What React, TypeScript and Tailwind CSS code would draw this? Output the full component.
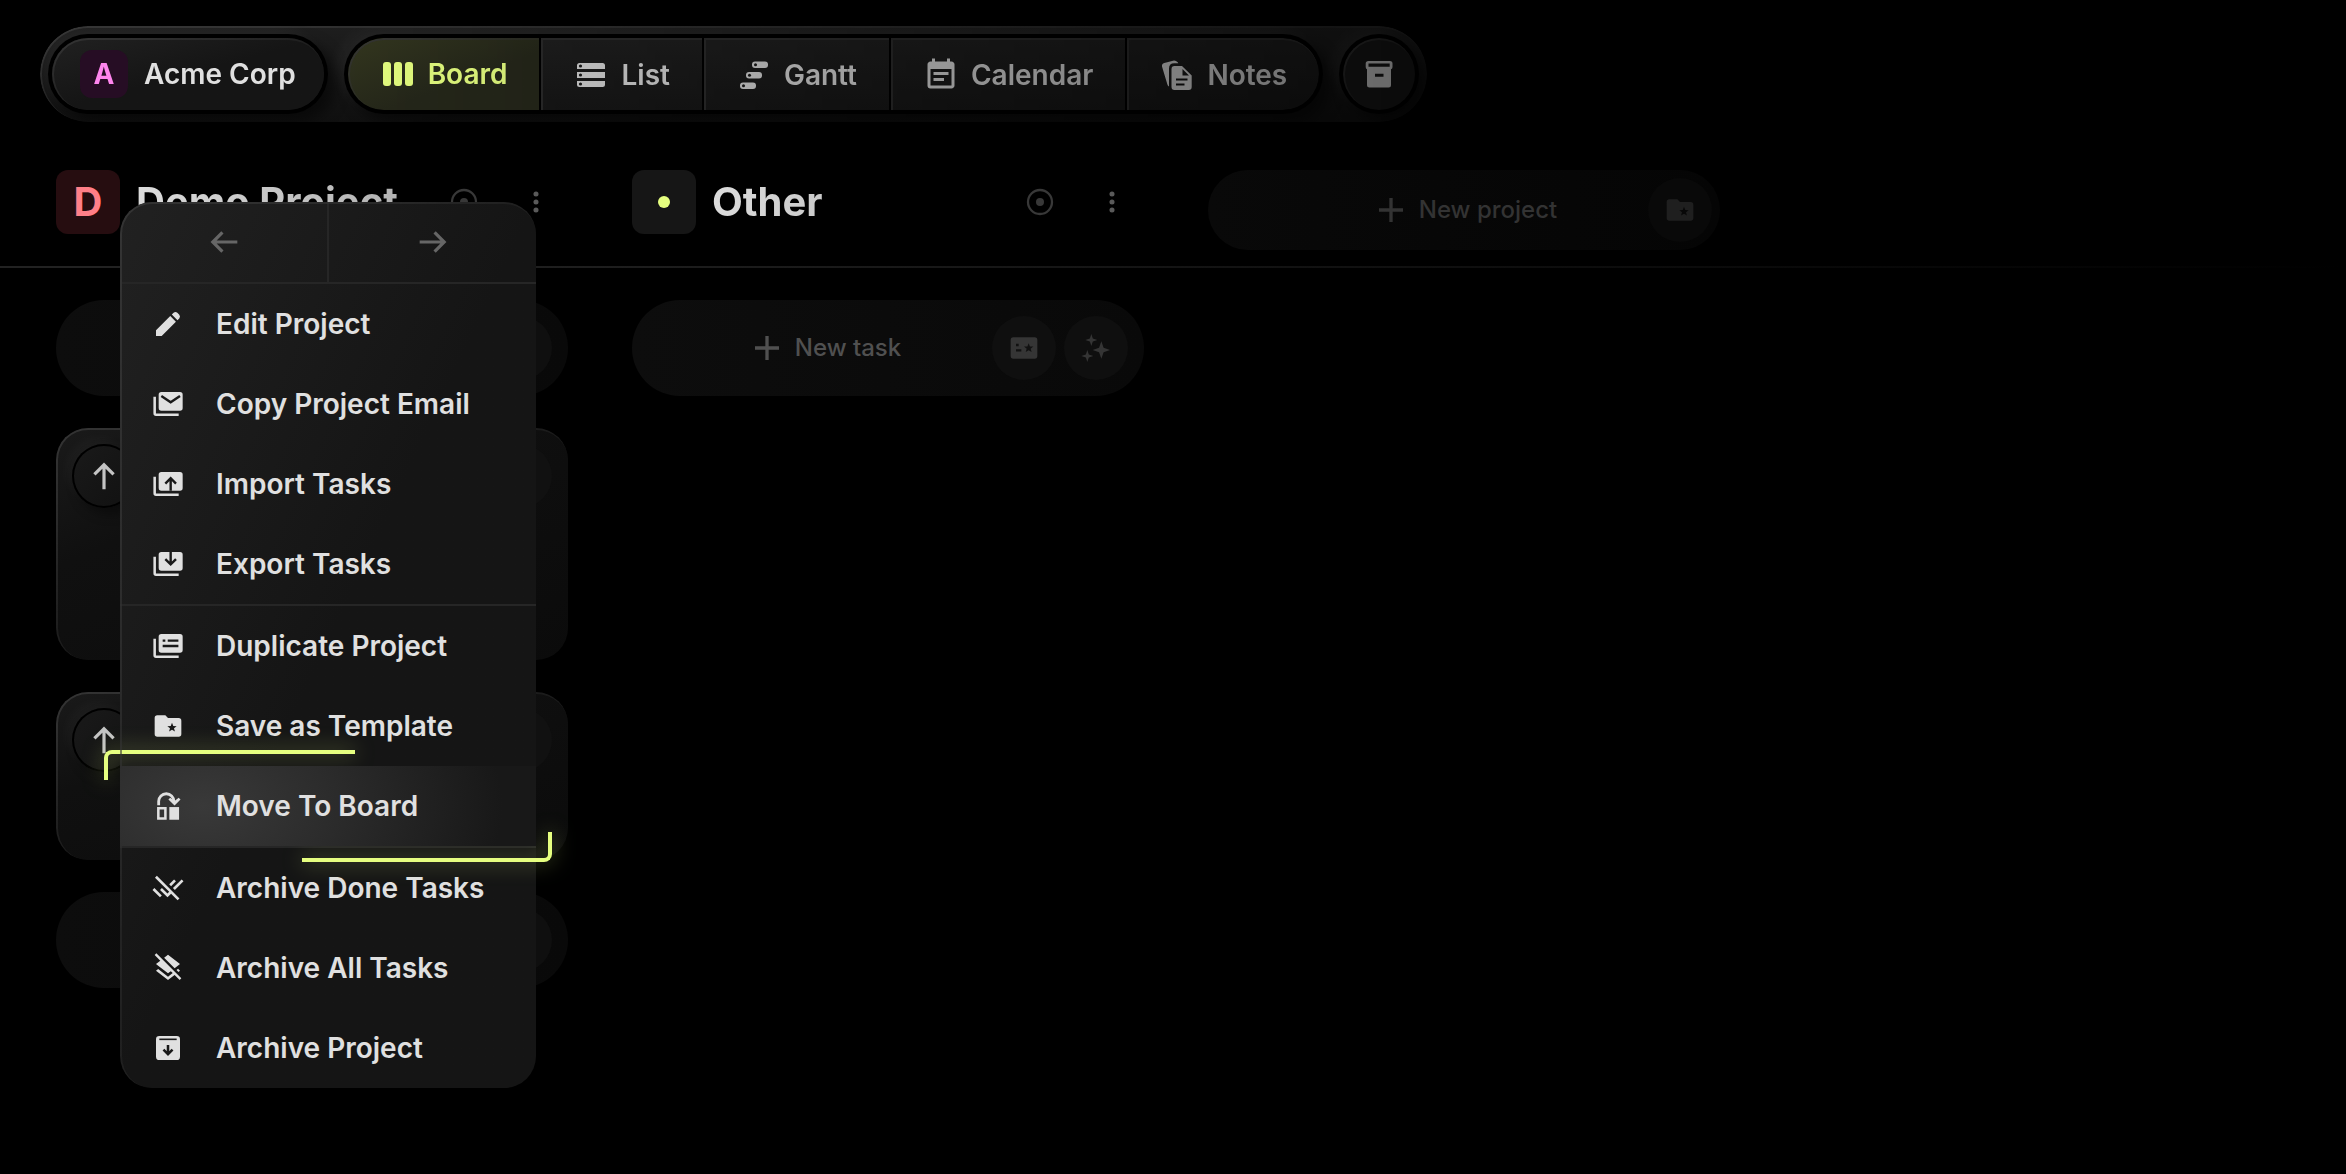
import type { ReactNode } from "react";
import { MdEventNote, MdLayersClear, MdRemoveDone } from "react-icons/md";

/* Light catching the top and left rim of a raised surface. */
function Rim({ className = "" }: { className?: string }) {
  return (
    <span
      aria-hidden="true"
      className={`pointer-events-none absolute inset-0 border-t-2 border-l-2 border-[#343434] [mask-image:linear-gradient(to_bottom_right,#000,transparent_75%)] ${className}`}
    />
  );
}

function Svg({ size = "size-8", box = 24, children }: { size?: string; box?: number; children: ReactNode }) {
  return (
    <svg aria-hidden="true" viewBox={`0 0 ${box} ${box}`} fill="currentColor" className={`${size} shrink-0`}>
      {children}
    </svg>
  );
}

const CUT = "#191919";
const STAR = "M0-3.6 .95-1.2 3.5-1.1 1.5.5 2.2 3 0 1.6-2.2 3-1.5.5-3.5-1.1-.95-1.2z";

const BoardIcon = () => (
  <Svg size="size-9" box={36}>
    <rect x="3" y="6" width="8" height="24" rx="3" />
    <rect x="14" y="6" width="8" height="24" rx="3" />
    <rect x="25" y="6" width="8" height="24" rx="3" />
  </Svg>
);

const ListIcon = () => (
  <Svg size="size-9" box={36}>
    <path d="M4 12V8.500q0-2.500 2.500-2.500h23q2.500 0 2.500 2.500V12zM4 15h28v6H4zM4 24h28v3.500q0 2.500-2.500 2.500h-23Q4 30 4 27.500z" />
    <g fill={CUT}>
      <circle cx="7.500" cy="9" r="1.600" />
      <circle cx="7.500" cy="18" r="1.600" />
      <circle cx="7.500" cy="27" r="1.600" />
    </g>
  </Svg>
);

const GanttIcon = () => (
  <Svg size="size-9" box={36}>
    <rect x="16" y="4.500" width="16" height="6.500" rx="3" />
    <rect x="10" y="15" width="16" height="6.500" rx="3" />
    <rect x="4" y="25.500" width="16" height="6.500" rx="3" />
    <g fill={CUT}>
      <circle cx="19.500" cy="7.700" r="1.500" />
      <circle cx="13.500" cy="18.200" r="1.500" />
      <circle cx="7.500" cy="28.700" r="1.500" />
    </g>
  </Svg>
);

const NotesIcon = () => (
  <Svg size="size-9" box={36}>
    <path d="M3 9.500q-.4-2.800 2.300-3.500l8.700-2.300q2.600-.6 4.700 1.600l.6 1h-4Q10 6.300 10 11.500V29.500q-1.200-.3-1.600-2z" />
    <path
      fillRule="evenodd"
      d="M15.500 9H23l9.700 9.500v11.500q0 3-3 3H15.500q-3 0-3-3V12q0-3 3-3zM23.500 12v6.500H30z"
    />
    <path d="M17 22.500h11.500M17 27.500h8.500" stroke="#101010" strokeWidth="2" />
  </Svg>
);

const ArchiveBoxIcon = () => (
  <Svg size="size-9" box={36}>
    <path
      fillRule="evenodd"
      d="M7.500 5h21.500q2.500 0 2.500 2.500v3.500q0 2-1.500 2.200V29q0 2.500-2.500 2.500h-19Q6 31.500 6 29V13.200Q4.700 12.800 4.700 11V7.500Q4.700 5 7.500 5zM7.500 7.500v3.200h21.200V7.500zM14 17.800v3h8.500v-3z"
    />
  </Svg>
);

const PencilIcon = () => (
  <Svg>
    <path d="M3 21v-4.250L13.700 6.050l4.250 4.250L7.250 21zM19.100 9.150 14.850 4.900l1.350-1.350q1.400-1.100 2.800 0L20.450 5q1.100 1.400 0 2.800z" />
  </Svg>
);

function StackIcon({ children }: { children: ReactNode }) {
  return (
    <Svg>
      <rect x="5" y="3" width="18" height="14" rx="2" />
      <path d="M2 6.500V19q0 1 1 1h17" fill="none" stroke="currentColor" strokeWidth="1.900" />
      <g fill="none" stroke={CUT} strokeWidth="1.800">
        {children}
      </g>
    </Svg>
  );
}

const MailStackIcon = () => (
  <StackIcon>
    <path d="m7 6 7 4.700L21 6" />
  </StackIcon>
);
const ImportIcon = () => (
  <StackIcon>
    <path d="M14 17V8M10 11.700l4-4 4 4" />
  </StackIcon>
);
const ExportIcon = () => (
  <StackIcon>
    <path d="M14 3v9M10 8.300l4 4 4-4" />
  </StackIcon>
);
const DuplicateIcon = () => (
  <StackIcon>
    <path d="M8 8h2M11.800 8h8M8 12h11.800" />
  </StackIcon>
);

const FolderStarIcon = ({ cut = CUT }: { cut?: string }) => (
  <Svg>
    <path d="M4 20q-2 0-2-2V6q0-2 2-2h6l2 2h8q2 0 2 2v10q0 2-2 2z" />
    <path d={STAR} fill={cut} transform="translate(15 13.200)" />
  </Svg>
);

const MoveIcon = () => (
  <Svg>
    <path fillRule="evenodd" d="M3.800 12.800H11v9.500H3.800zM5.700 14.700v5.700h3.400v-5.700z" />
    <rect x="13" y="12.800" width="7.300" height="9.500" />
    <path d="M5 11.500V8.500a5.700 5.700 0 0 1 11.400 0" fill="none" stroke="currentColor" strokeWidth="2.100" />
    <path d="M12.300 7.200 13.700 5.800l3.200 2.400L20 5.800 21.400 7.200 16.900 11.700z" />
  </Svg>
);

const ArchiveDownIcon = () => (
  <Svg>
    <rect x="3" y="3" width="18" height="18" rx="2.500" />
    <path d="M5.500 5.500h13" fill="none" stroke={CUT} strokeWidth="1.200" />
    <path d="M12 9.800v6.500M8.600 13.200l3.400 3.400 3.400-3.400" fill="none" stroke={CUT} strokeWidth="1.900" />
  </Svg>
);

const PlusIcon = () => (
  <Svg>
    <path d="M12 3v18M3 12h18" stroke="currentColor" strokeWidth="2.500" />
  </Svg>
);

const TemplateIcon = () => (
  <Svg>
    <rect x="2" y="4" width="20" height="16" rx="2" />
    <path d="M6 9.800h2M6 13.800h4" stroke="#111" strokeWidth="1.800" />
    <path d={STAR} fill="#111" transform="translate(15.500 12)" />
  </Svg>
);

const SparkleIcon = () => (
  <Svg>
    <path d="M16 7 17.700 11.800 22.500 13.500 17.700 15.200 16 20 14.300 15.200 9.500 13.500 14.300 11.800z" />
    <path d="M8.500 1.500 9.600 4.900 13 6 9.600 7.100 8.500 10.500 7.400 7.100 4 6 7.400 4.900z" />
    <path d="M5.500 13.500 6.600 16.900 10 18 6.600 19.100 5.500 22.500 4.400 19.100 1 18 4.400 16.900z" />
  </Svg>
);

const TargetIcon = () => (
  <Svg>
    <circle cx="12" cy="12" r="9" fill="none" stroke="currentColor" strokeWidth="1.700" />
    <circle cx="12" cy="12" r="3" />
  </Svg>
);

const DotsIcon = () => (
  <Svg>
    <circle cx="12" cy="6" r="1.900" />
    <circle cx="12" cy="12" r="1.900" />
    <circle cx="12" cy="18" r="1.900" />
  </Svg>
);

const ArrowIcon = ({ className = "" }: { className?: string }) => (
  <svg aria-hidden="true" viewBox="0 0 24 24" className={`size-8 ${className}`} fill="none" stroke="currentColor" strokeWidth="2.400">
    <path d="M2 12h18M13.200 4.800l7.200 7.200-7.200 7.200" />
  </svg>
);

const TABS = [
  { label: "List", icon: <ListIcon /> },
  { label: "Gantt", icon: <GanttIcon /> },
  { label: "Calendar", icon: <MdEventNote aria-hidden="true" className="size-9" /> },
  { label: "Notes", icon: <NotesIcon /> },
];

const RAISED =
  "shadow-[0_0_0_4px_#000,8px_8px_14px_4px_rgba(0,0,0,0.5),-8px_-6px_16px_2px_rgba(255,255,255,0.05)]";

function TopBar() {
  return (
    <header className="relative flex w-fit gap-6 rounded-full bg-linear-to-b from-[#1e1e1e] to-[#101010] p-3 text-[28px] font-semibold text-[#e0e0e0] [mask-image:linear-gradient(to_right,#000_20%,rgba(0,0,0,0.48))]">
      <Rim className="rounded-full" />
      <button type="button" className={`relative flex h-18 items-center gap-4 rounded-full bg-linear-to-br from-[#212121] to-[#151515] to-50% px-7 ${RAISED}`}>
        <Rim className="rounded-full" />
        <span className="grid size-12 place-items-center rounded-xl bg-[#260d24] text-[28px] font-bold text-[#ff85ee]">A</span>
        Acme Corp
      </button>
      <nav className={`flex h-18 gap-0.5 overflow-hidden rounded-full bg-black ${RAISED}`}>
        <button type="button" aria-current="page" className="relative flex items-center gap-3 bg-linear-to-br from-[#34371f] to-[#25271a] to-60% px-8 text-[#e6ff80]">
          <Rim className="rounded-l-full" />
          <BoardIcon />
          Board
        </button>
        {TABS.map((t) => (
          <button
            key={t.label}
            type="button"
            className="flex items-center gap-3 border-t-2 border-l-2 border-[#2b2b2b] bg-linear-to-b from-[#1e1e1e] to-[#161616] pr-8 pl-[30px] text-[#d4d4d4] last:rounded-r-full"
          >
            {t.icon}
            {t.label}
          </button>
        ))}
      </nav>
      <button type="button" aria-label="Archive" className={`relative grid size-18 place-items-center rounded-full bg-[#171717] text-[#d4d4d4] ${RAISED}`}>
        <Rim className="rounded-full" />
        <ArchiveBoxIcon />
      </button>
    </header>
  );
}

function ProjectHeader({ badge, title, children }: { badge: ReactNode; title: string; children?: ReactNode }) {
  return (
    <div className="relative flex items-center gap-4">
      {badge}
      <h2 className="flex-1 bg-linear-to-r from-[#dcdcdc] to-[#b0b0b0] bg-clip-text text-[40px] leading-12 font-bold text-transparent">{title}</h2>
      <div className="flex gap-2">
        <button type="button" aria-label={`Focus ${title}`} className="grid size-16 place-items-center text-[#383838]">
          <TargetIcon />
        </button>
        <button type="button" aria-label={`${title} menu`} className="grid size-16 place-items-center text-[#5a5a5a]">
          <DotsIcon />
        </button>
      </div>
      {children}
    </div>
  );
}

function NewTask() {
  return (
    <div className="flex h-24 items-center gap-2 rounded-full bg-linear-to-r from-[#0d0d0d] to-[#090909] pr-4">
      <button type="button" className="flex flex-1 items-center justify-center gap-3 pl-9 text-2xl font-medium text-[#505050]">
        <PlusIcon />
        New task
      </button>
      <button type="button" aria-label="New task from template" className="grid size-16 place-items-center rounded-full bg-[#0f0f0f] text-[#353535]">
        <TemplateIcon />
      </button>
      <button type="button" aria-label="Generate tasks" className="grid size-16 place-items-center rounded-full bg-[#0f0f0f] text-[#353535]">
        <SparkleIcon />
      </button>
    </div>
  );
}

function TaskCard({ height }: { height: string }) {
  return (
    <article className={`relative flex items-start justify-between rounded-[32px] bg-linear-to-br from-[#1a1a1a] via-[#101010] via-30% to-[#0b0b0b] p-4 ${height}`}>
      <Rim className="rounded-[32px]" />
      <button
        type="button"
        aria-label="Raise priority"
        className="relative grid size-16 place-items-center rounded-full bg-linear-to-br from-[#1a1a1a] to-[#111] text-[#c4c4c4] shadow-[inset_0_0_0_2px_#000,6px_6px_12px_rgba(0,0,0,0.4),-6px_-6px_12px_rgba(255,255,255,0.03)]"
      >
        <ArrowIcon className="-rotate-90" />
      </button>
      <span className="size-16 rounded-full bg-[#111]" />
    </article>
  );
}

type Item = { label: string; icon: ReactNode; active?: boolean };

const GROUPS: Item[][] = [
  [
    { label: "Edit Project", icon: <PencilIcon /> },
    { label: "Copy Project Email", icon: <MailStackIcon /> },
    { label: "Import Tasks", icon: <ImportIcon /> },
    { label: "Export Tasks", icon: <ExportIcon /> },
  ],
  [
    { label: "Duplicate Project", icon: <DuplicateIcon /> },
    { label: "Save as Template", icon: <FolderStarIcon /> },
    { label: "Move To Board", icon: <MoveIcon />, active: true },
  ],
  [
    { label: "Archive Done Tasks", icon: <MdRemoveDone aria-hidden="true" className="size-8" /> },
    { label: "Archive All Tasks", icon: <MdLayersClear aria-hidden="true" className="size-8" /> },
    { label: "Archive Project", icon: <ArchiveDownIcon /> },
  ],
];

function MenuRow({ item }: { item: Item }) {
  const row = "flex h-20 w-full items-center gap-8 px-8 text-left whitespace-nowrap";
  if (!item.active) {
    return (
      <li>
        <button type="button" className={row}>
          {item.icon}
          {item.label}
        </button>
      </li>
    );
  }
  return (
    <li className="relative">
      <span aria-hidden="true" className="absolute -top-4 -left-4 h-[30px] w-[251px] rounded-tl-lg border-t-4 border-l-4 border-[#e6ff80] drop-shadow-[0_0_10px_rgba(230,255,128,0.5)]" />
      <span aria-hidden="true" className="absolute -right-4 -bottom-4 z-20 h-[30px] w-[250px] rounded-br-lg border-r-4 border-b-4 border-[#e6ff80] drop-shadow-[0_0_10px_rgba(230,255,128,0.5)]" />
      <button
        type="button"
        className={`${row} relative z-30 bg-[#181818] bg-[radial-gradient(ellipse_72%_240%_at_20%_50%,#393939,#2b2b2b_45%,#181818)]`}
      >
        {item.icon}
        {item.label}
      </button>
    </li>
  );
}

function ProjectMenu() {
  return (
    <div className="absolute top-8 left-16 z-10 w-[416px] rounded-[32px] bg-linear-to-br from-[#212121] to-[#151515] to-50% text-[28px] font-semibold text-[#e0e0e0]">
      <div className="flex text-[#666]">
        <button type="button" aria-label="Move left" className="grid h-20 flex-1 place-items-center border-r-2 border-[#262626]">
          <ArrowIcon className="rotate-180" />
        </button>
        <button type="button" aria-label="Move right" className="grid h-20 flex-1 place-items-center">
          <ArrowIcon />
        </button>
      </div>
      {GROUPS.map((group) => (
        <ul key={group[0].label} className="border-t-2 border-[#262626]">
          {group.map((item) => (
            <MenuRow key={item.label} item={item} />
          ))}
        </ul>
      ))}
      <Rim className="rounded-[32px]" />
    </div>
  );
}

export default function App() {
  return (
    <div className="flex min-h-screen flex-col overflow-x-hidden bg-black pt-[26px] pb-16 font-['Inter',sans-serif] text-white antialiased">
      <div className="px-10">
        <TopBar />
      </div>
      <main className="mt-12">
        <div className="flex gap-16 px-14 pb-8">
          <section className="relative z-10 w-[512px] shrink-0">
            <ProjectHeader
              title="Demo Project"
              badge={<span className="grid size-16 place-items-center rounded-xl bg-[#260d10] text-[40px] font-bold text-[#ff7f88]">D</span>}
            >
              <ProjectMenu />
            </ProjectHeader>
          </section>
          <section className="w-[512px] shrink-0">
            <ProjectHeader
              title="Other"
              badge={
                <span className="grid size-16 place-items-center rounded-xl bg-[#161616]">
                  <span className="size-3 rounded-full bg-[#e6ff80]" />
                </span>
              }
            />
          </section>
          <div className="-mb-4 flex h-20 w-[512px] shrink-0 items-center rounded-full bg-linear-to-r from-[#090909] to-[#050505] pr-2">
            <button type="button" className="flex flex-1 items-center justify-center gap-3 pl-19 text-2xl font-medium text-[#333]">
              <PlusIcon />
              New project
            </button>
            <button type="button" aria-label="New project from template" className="grid size-16 place-items-center rounded-full bg-[#090909] text-[#1f1f1f]">
              <FolderStarIcon cut="#080808" />
            </button>
          </div>
        </div>
        <div className="h-0.5 bg-linear-to-r from-[#222] from-15% to-transparent" />
        <div className="flex items-start gap-16 px-14 pt-8">
          <section className="flex w-[512px] shrink-0 flex-col gap-8">
            <NewTask />
            <TaskCard height="min-h-[232px]" />
            <TaskCard height="min-h-[168px]" />
            <NewTask />
          </section>
          <section className="w-[512px] shrink-0">
            <NewTask />
          </section>
        </div>
      </main>
    </div>
  );
}
